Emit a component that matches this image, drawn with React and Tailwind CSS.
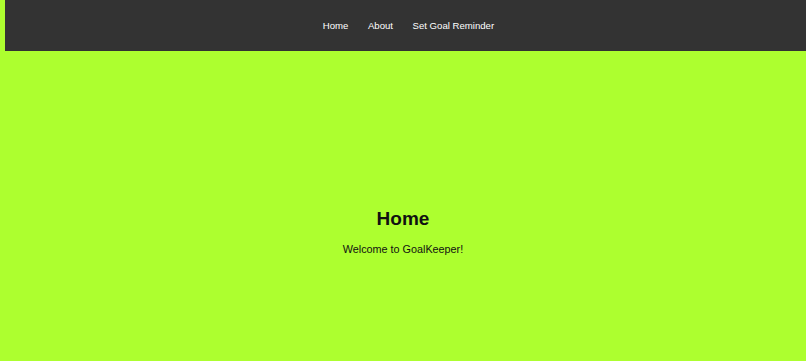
import React from 'react'

const LINKS = ['Home', 'About', 'Set Goal Reminder']

export default function App() {
  return (
    <div className="min-h-screen bg-[#adff2f] px-[5px] font-['Liberation_Sans',Arial,sans-serif]">
      {/* Top bar */}
      <header className="-mr-[5px] flex h-[51px] items-center justify-center bg-[#333333] pl-[6px]">
        <nav className="flex items-center gap-[19.5px]">
          {LINKS.map(l => (
            <a key={l} href="#" className="text-[9.6px] leading-[9.6px] text-white">
              {l}
            </a>
          ))}
        </nav>
      </header>

      {/* Page */}
      <main className="mt-[158px] flex flex-col items-center text-center">
        <h1 className="text-[19px] leading-[19px] font-bold text-[#111]">Home</h1>
        <p className="mt-[16px] text-[10.8px] leading-[10.8px] text-[#111]">Welcome to GoalKeeper!</p>
      </main>
    </div>
  )
}
